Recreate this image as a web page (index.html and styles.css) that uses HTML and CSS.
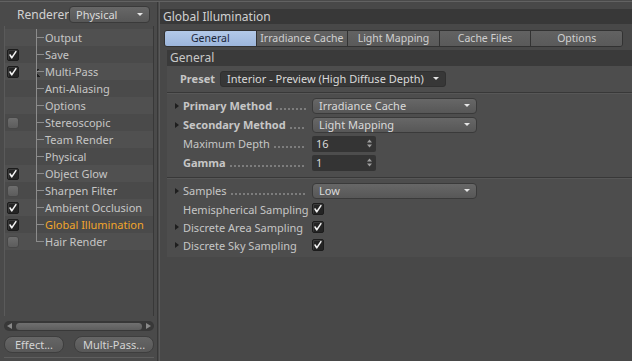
FILE: index.html
```html
<!DOCTYPE html>
<html lang="en">
<head>
    <meta charset="UTF-8">
    <meta name="viewport" content="width=device-width, initial-scale=1.0">
    <link rel="stylesheet" href="styles.css">
    <title>Render Settings</title>
</head>
<body>
    <div class="app">
        <!-- left: renderer + effect tree -->
        <aside class="side">
            <div class="renderer">
                <span class="renderer-label">Renderer</span>
                <div class="select select-renderer">Physical<i class="arrow"></i></div>
            </div>

            <ul class="tree">
                <li class="node"><span class="box"></span><span class="twig first"></span>Output</li>
                <li class="node"><span class="box on"><svg viewBox="0 0 12 12"><path d="M2.5 6 L4.5 9.5 L9.5 2"/></svg></span><span class="twig"></span>Save</li>
                <li class="node"><span class="box on"><svg viewBox="0 0 12 12"><path d="M2.5 6 L4.5 9.5 L9.5 2"/></svg></span><span class="twig fold"></span>Multi-Pass</li>
                <li class="node"><span class="box"></span><span class="twig"></span>Anti-Aliasing</li>
                <li class="node"><span class="box"></span><span class="twig"></span>Options</li>
                <li class="node"><span class="box off"></span><span class="twig"></span>Stereoscopic</li>
                <li class="node"><span class="box"></span><span class="twig"></span>Team Render</li>
                <li class="node"><span class="box"></span><span class="twig"></span>Physical</li>
                <li class="node"><span class="box on"><svg viewBox="0 0 12 12"><path d="M2.5 6 L4.5 9.5 L9.5 2"/></svg></span><span class="twig"></span>Object Glow</li>
                <li class="node"><span class="box off"></span><span class="twig"></span>Sharpen Filter</li>
                <li class="node"><span class="box on"><svg viewBox="0 0 12 12"><path d="M2.5 6 L4.5 9.5 L9.5 2"/></svg></span><span class="twig"></span>Ambient Occlusion</li>
                <li class="node active"><span class="box on"><svg viewBox="0 0 12 12"><path d="M2.5 6 L4.5 9.5 L9.5 2"/></svg></span><span class="twig"></span>Global Illumination</li>
                <li class="node"><span class="box off"></span><span class="twig last"></span>Hair Render</li>
            </ul>

            <div class="hscroll">
                <span class="sarrow sarrow-left"></span>
                <span class="thumb"></span>
                <span class="sarrow sarrow-right"></span>
            </div>

            <div class="side-buttons">
                <button class="pill pill-effect">Effect...</button>
                <button class="pill pill-mp">Multi-Pass...</button>
            </div>
        </aside>

        <div class="divider"></div>

        <!-- right: settings of the selected effect -->
        <main class="main">
            <div class="title">Global Illumination</div>

            <div class="tabs">
                <span class="tab current">General</span>
                <span class="tab">Irradiance Cache</span>
                <span class="tab">Light Mapping</span>
                <span class="tab">Cache Files</span>
                <span class="tab">Options</span>
            </div>

            <div class="params">
                <div class="section">General</div>

                <div class="preset">
                    <span class="preset-label">Preset</span>
                    <div class="select select-dark">Interior - Preview (High Diffuse Depth)<i class="arrow"></i></div>
                </div>

                <div class="sep"></div>

                <div class="group group-method">
                    <div class="prop">
                        <span class="tri"></span>
                        <span class="label bold">Primary Method<span class="dots"></span></span>
                        <div class="select select-prop">Irradiance Cache<i class="arrow"></i></div>
                    </div>
                    <div class="prop">
                        <span class="tri"></span>
                        <span class="label bold">Secondary Method<span class="dots"></span></span>
                        <div class="select select-prop">Light Mapping<i class="arrow"></i></div>
                    </div>
                    <div class="prop">
                        <span class="tri none"></span>
                        <span class="label">Maximum Depth<span class="dots"></span></span>
                        <div class="num">16<svg class="spin" viewBox="0 0 5 9"><path d="M0 3.5 L2.5 0.5 L5 3.5Z M0 5.5 L2.5 8.5 L5 5.5Z"/></svg></div>
                    </div>
                    <div class="prop">
                        <span class="tri none"></span>
                        <span class="label bold">Gamma<span class="dots"></span></span>
                        <div class="num">1<svg class="spin" viewBox="0 0 5 9"><path d="M0 3.5 L2.5 0.5 L5 3.5Z M0 5.5 L2.5 8.5 L5 5.5Z"/></svg></div>
                    </div>
                </div>

                <div class="sep"></div>

                <div class="group group-samples">
                    <div class="prop">
                        <span class="tri"></span>
                        <span class="label">Samples<span class="dots"></span></span>
                        <div class="select select-prop">Low<i class="arrow"></i></div>
                    </div>
                    <div class="prop prop-short">
                        <span class="tri none"></span>
                        <span class="label">Hemispherical Sampling</span>
                        <span class="box on"><svg viewBox="0 0 12 12"><path d="M2.5 6 L4.5 9.5 L9.5 2"/></svg></span>
                    </div>
                    <div class="prop prop-short">
                        <span class="tri"></span>
                        <span class="label">Discrete Area Sampling</span>
                        <span class="box on"><svg viewBox="0 0 12 12"><path d="M2.5 6 L4.5 9.5 L9.5 2"/></svg></span>
                    </div>
                    <div class="prop prop-short">
                        <span class="tri"></span>
                        <span class="label">Discrete Sky Sampling</span>
                        <span class="box on"><svg viewBox="0 0 12 12"><path d="M2.5 6 L4.5 9.5 L9.5 2"/></svg></span>
                    </div>
                </div>
            </div>
        </main>
    </div>
</body>
</html>
```

FILE: styles.css
```css
*{
    box-sizing: border-box;
}
html, body{
    margin: 0;
    padding: 0;
}
body{
    width: 632px;
    height: 361px;
    overflow: hidden;
    padding-top: 1px;
    background-color: #4a4a4a;
    font-family: "Noto Sans", "Open Sans", sans-serif;
    font-size: 11px;
    color: #c6c6c6;
}
.app{
    display: flex;
    height: 360px;
    border-top: 1px solid #626262;
}

/* left side */
.side{
    width: 157px;
    display: flex;
    flex-direction: column;
    padding: 0 3px 0 4px;
}
.renderer{
    display: flex;
    align-items: center;
    height: 18px;
    margin-top: 3px;
}
.renderer-label{
    margin-left: 13px;
    width: 52px;
    font-size: 12px;
    color: #d2d2d2;
}
.select{
    display: flex;
    align-items: center;
    height: 16px;
    padding: 0 6px;
    border: 1px solid #3a3a3a;
    border-radius: 4px;
    background: linear-gradient(#676767, #575757);
    color: #dadada;
    white-space: nowrap;
}
.select-renderer{
    width: 81px;
    height: 17px;
}
.arrow{
    margin-left: auto;
    width: 0;
    height: 0;
    border-left: 3.5px solid transparent;
    border-right: 3.5px solid transparent;
    border-top: 3.5px solid #e6e6e6;
}

.tree{
    flex: 1;
    list-style: none;
    margin: 3px 0 0;
    padding: 3px 0 0;
    border-left: 1px solid #5a5a5a;
    border-right: 1px solid #383838;
}
.node{
    display: flex;
    align-items: center;
    height: 17px;
    padding-left: 2px;
    white-space: nowrap;
}
.node:nth-child(odd){
    background-color: #505050;
}
.node.active{
    color: #f2a62a;
}
.box{
    display: inline-block;
    flex: none;
    width: 12px;
    height: 12px;
    border-radius: 2px;
}
.box.on{
    background-color: #242424;
    border: 1px solid #1c1c1c;
    box-shadow: inset 1px 1px 0 #3a3a3a;
}
.box.off{
    background: linear-gradient(#6e6e6e, #5c5c5c);
    border: 1px solid #474747;
    border-radius: 3px;
}
.box svg{
    display: block;
    width: 10px;
    height: 10px;
}
.box path{
    fill: none;
    stroke: #f2f2f2;
    stroke-width: 1.9;
    stroke-linecap: round;
    stroke-linejoin: round;
}
.twig{
    flex: none;
    align-self: stretch;
    width: 8px;
    margin: 0 1px 0 17px;
    background:
        linear-gradient(#8c8c8c, #8c8c8c) left top / 1px 100% no-repeat,
        linear-gradient(#8c8c8c, #8c8c8c) left center / 100% 1px no-repeat;
}
.twig.last{
    background:
        linear-gradient(#8c8c8c, #8c8c8c) left top / 1px 50% no-repeat,
        linear-gradient(#8c8c8c, #8c8c8c) left center / 100% 1px no-repeat;
}
.twig.fold{
    background:
        linear-gradient(#8c8c8c, #8c8c8c) left top / 1px 100% no-repeat,
        linear-gradient(#8c8c8c, #8c8c8c) left center / 100% 1px no-repeat,
        linear-gradient(135deg, #1e1e1e 50%, transparent 50%) left 0 top 6px / 4px 4px no-repeat,
        linear-gradient(45deg, #1e1e1e 50%, transparent 50%) left 0 top 10px / 4px 4px no-repeat;
}

.hscroll{
    display: flex;
    align-items: center;
    height: 10px;
    margin-top: 5px;
    padding: 0 3px;
    border-radius: 5px;
    background-color: #383838;
}
.thumb{
    flex: 1;
    height: 7px;
    margin: 0 4px;
    border-radius: 4px;
    background: linear-gradient(#707070, #5e5e5e);
}
.sarrow{
    width: 0;
    height: 0;
    border-top: 3px solid transparent;
    border-bottom: 3px solid transparent;
}
.sarrow-left{
    border-right: 5px solid #8a8a8a;
}
.sarrow-right{
    border-left: 5px solid #8a8a8a;
}

.side-buttons{
    display: flex;
    justify-content: space-between;
    margin: 5px 0 0;
    padding-bottom: 4px;
    border-bottom: 1px solid #5e5e5e;
    margin-bottom: 3px;
}
.pill{
    height: 17px;
    padding: 0;
    border: 1px solid #3e3e3e;
    border-radius: 8px;
    background: linear-gradient(#666, #585858);
    font-family: inherit;
    font-size: 11px;
    color: #d4d4d4;
}
.pill-effect{
    width: 60px;
}
.pill-mp{
    width: 80px;
}

.divider{
    width: 3px;
    border-left: 1px solid #383838;
    border-right: 1px solid #5a5a5a;
}

/* right side */
.main{
    flex: 1;
    display: flex;
    flex-direction: column;
    background-color: #484848;
}
.title{
    height: 15px;
    margin-top: 7px;
    padding-left: 3px;
    line-height: 15px;
    font-size: 12px;
    background-color: #383838;
    color: #d0d0d0;
}
.tabs{
    display: flex;
    height: 17px;
    margin: 6px 9px 0 4px;
    border: 1px solid #323232;
    border-radius: 3px;
    overflow: hidden;
}
.tab{
    flex: 1;
    text-align: center;
    line-height: 15px;
    font-size: 10.5px;
    background: linear-gradient(#626262, #5a5a5a);
    color: #d0d0d0;
    border-left: 1px solid #333;
}
.tab:first-child{
    border-left: none;
}
.tab.current{
    background: linear-gradient(#b3c9e8, #9cb6dc);
    color: #1b2638;
}

.params{
    margin: 3px 0 0 7px;
    padding-bottom: 3px;
    background-color: #4d4d4d;
}
.section{
    height: 16px;
    padding-left: 3px;
    line-height: 16px;
    font-size: 12px;
    background-color: #3a3a3a;
    color: #c8c8c8;
}
.preset{
    display: flex;
    align-items: center;
    height: 17px;
    margin-top: 4px;
}
.preset-label{
    width: 48px;
    text-align: right;
    margin-right: 5px;
    font-weight: bold;
}
.select-dark{
    width: 226px;
    background: #373737;
    border-color: #303030;
    border-radius: 3px;
}
.sep{
    height: 2px;
    margin-top: 5px;
    border-top: 1px solid #383838;
    border-bottom: 1px solid #575757;
}
.group-method{
    margin-top: 2px;
}
.group-samples{
    margin-top: 2px;
}
.prop{
    display: flex;
    align-items: center;
    height: 19px;
    padding-left: 8px;
}
.prop-short{
    height: 18px;
}
.tri{
    flex: none;
    width: 0;
    height: 0;
    border-top: 3px solid transparent;
    border-bottom: 3px solid transparent;
    border-left: 4px solid #1e1e1e;
}
.tri.none{
    border-left-color: transparent;
}
.label{
    display: flex;
    width: 129px;
    height: 15px;
    line-height: 15px;
    margin-left: 4px;
    white-space: nowrap;
    overflow: hidden;
}
.label.bold{
    font-weight: bold;
}
.dots{
    flex: 1;
    margin: 0 6px 0 3px;
    background: radial-gradient(circle, #8e8e8e 0.6px, transparent 1px) left 0 bottom 3px / 4px 2px repeat-x;
}
.select-prop{
    width: 165px;
}
.num{
    display: flex;
    align-items: center;
    width: 64px;
    height: 16px;
    padding: 0 4px;
    border-radius: 2px;
    background-color: #343434;
    color: #dadada;
}
.spin{
    margin-left: auto;
    width: 5px;
    height: 9px;
    fill: #a0a0a0;
}
```
